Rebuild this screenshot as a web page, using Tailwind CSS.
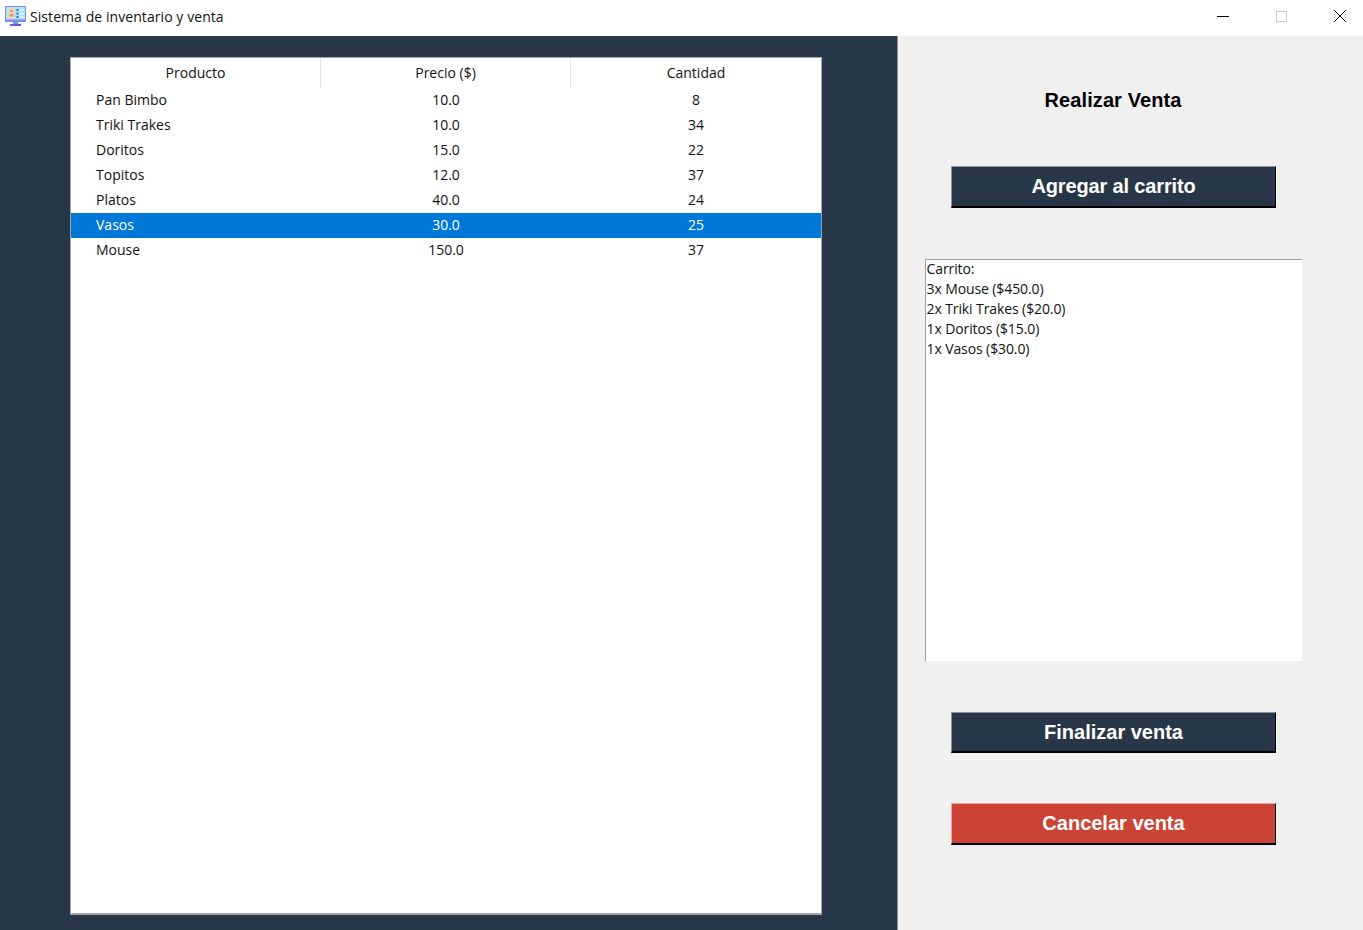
<!DOCTYPE html>
<html lang="es">
<head>
  <meta charset="UTF-8">
  <title>Sistema de inventario y venta</title>
  <script src="https://cdn.jsdelivr.net/npm/@tailwindcss/browser@4"></script>
</head>
<body class="h-[930px] w-[1363px] overflow-hidden bg-[#f0f0f0] font-['Open_Sans',sans-serif] text-black">
  <!-- Barra de titulo -->
  <div class="flex h-9 items-center bg-white">
    <svg class="ml-[5px] h-[21px] w-[21px] -translate-y-[2px]" viewBox="0 0 21 21">
      <rect x="0.5" y="0.5" width="20" height="15" fill="#a9e6f7" stroke="#7f8cf0"/>
      <rect x="1" y="13.5" width="19" height="2" fill="#7f8cf0"/>
      <rect x="3" y="2.5" width="7" height="10" fill="#f6d3bd"/>
      <rect x="5" y="4" width="3" height="2" fill="#d99a80"/>
      <rect x="4.5" y="8" width="4" height="2.5" fill="#d99a80"/>
      <rect x="11.5" y="3" width="2" height="2" fill="#4a62d8"/>
      <rect x="14.5" y="3.5" width="4" height="1" fill="#ffffff"/>
      <rect x="11.5" y="6.5" width="2" height="2" fill="#4a62d8"/>
      <rect x="14.5" y="7" width="4" height="1" fill="#ffffff"/>
      <rect x="11.5" y="10" width="2" height="2" fill="#4a62d8"/>
      <rect x="14.5" y="10.5" width="4" height="1" fill="#ffffff"/>
      <rect x="8" y="16" width="5" height="2" fill="#7f8cf0"/>
      <rect x="5" y="18" width="11" height="2" fill="#5b63d8"/>
    </svg>
    <span class="ml-1 -translate-y-[2px] text-[14px] tracking-[0.07px] text-[#111]">Sistema de inventario y venta</span>
    <div class="ml-auto flex -translate-y-[2px] items-center">
      <div class="flex w-[58px] justify-center"><div class="h-px w-3 bg-black"></div></div>
      <div class="flex w-[58px] justify-center"><div class="h-[11px] w-[11px] border border-[#cccccc]"></div></div>
      <svg class="mr-[17px] ml-6 h-3 w-3" viewBox="0 0 12 12"><path d="M0 0L12 12M12 0L0 12" stroke="#000" stroke-width="1" fill="none"/></svg>
    </div>
  </div>

  <div class="flex h-[894px]">
    <!-- Inventario -->
    <div class="w-[898px] border-r border-[#8a95a3] bg-[#283747] pt-[21px] pl-[70px]">
      <div class="h-[858px] w-[752px] border border-b-2 border-[#a0a6ad] bg-white text-[14px] text-[#111]">
        <table class="w-[750px] table-fixed border-separate border-spacing-0 [&_td]:pb-0.5 [&_th]:pb-0.5">
          <thead>
            <tr class="h-[30px]">
              <th class="w-[250px] border-r border-[#e5e5e5] font-normal">Producto</th>
              <th class="w-[250px] border-r border-[#e5e5e5] font-normal">Precio ($)</th>
              <th class="w-[250px] font-normal">Cantidad</th>
            </tr>
          </thead>
          <tbody>
            <tr class="h-[25px]"><td class="pl-[25px]">Pan Bimbo</td><td class="text-center">10.0</td><td class="text-center">8</td></tr>
            <tr class="h-[25px]"><td class="pl-[25px]">Triki Trakes</td><td class="text-center">10.0</td><td class="text-center">34</td></tr>
            <tr class="h-[25px]"><td class="pl-[25px]">Doritos</td><td class="text-center">15.0</td><td class="text-center">22</td></tr>
            <tr class="h-[25px]"><td class="pl-[25px]">Topitos</td><td class="text-center">12.0</td><td class="text-center">37</td></tr>
            <tr class="h-[25px]"><td class="pl-[25px]">Platos</td><td class="text-center">40.0</td><td class="text-center">24</td></tr>
            <tr class="h-[25px] bg-[#0078d7] text-white"><td class="pl-[25px]">Vasos</td><td class="text-center">30.0</td><td class="text-center">25</td></tr>
            <tr class="h-[25px]"><td class="pl-[25px]">Mouse</td><td class="text-center">150.0</td><td class="text-center">37</td></tr>
          </tbody>
        </table>
      </div>
    </div>

    <!-- Venta -->
    <div class="flex flex-1 flex-col items-center pr-[35px] font-['Liberation_Sans',sans-serif] font-bold">
      <h2 class="mt-[52px] h-6 text-[20px] leading-6 tracking-[0.1px] text-black">Realizar Venta</h2>
      <button class="mt-[54px] ml-px h-[42px] w-[325px] border border-b-2 border-t-[#8a95a3] border-r-black border-b-black border-l-[#8a95a3] bg-[#283747] pb-px text-[20px] tracking-[-0.15px] text-white">Agregar al carrito</button>
      <div class="mt-[51px] h-[402px] w-[377px] border-t border-l border-t-[#a0a0a0] border-l-[#a0a0a0] bg-white pl-px font-['Open_Sans',sans-serif] text-[14px] leading-5 font-normal tracking-[-0.1px] text-[#111]">
        <div class="-mt-px">
          <p>Carrito:</p>
          <p>3x Mouse ($450.0)</p>
          <p>2x Triki Trakes ($20.0)</p>
          <p>1x Doritos ($15.0)</p>
          <p>1x Vasos ($30.0)</p>
        </div>
      </div>
      <button class="mt-[51px] ml-px h-[41px] w-[325px] border border-b-2 border-t-[#8a95a3] border-r-black border-b-black border-l-[#8a95a3] bg-[#283747] pb-px text-[20px] text-white">Finalizar venta</button>
      <button class="mt-[50px] ml-px h-[42px] w-[325px] border border-b-2 border-t-[#e8a79f] border-r-black border-b-black border-l-[#e8a79f] bg-[#cb4335] pb-px text-[20px] text-white">Cancelar venta</button>
    </div>
  </div>
</body>
</html>
